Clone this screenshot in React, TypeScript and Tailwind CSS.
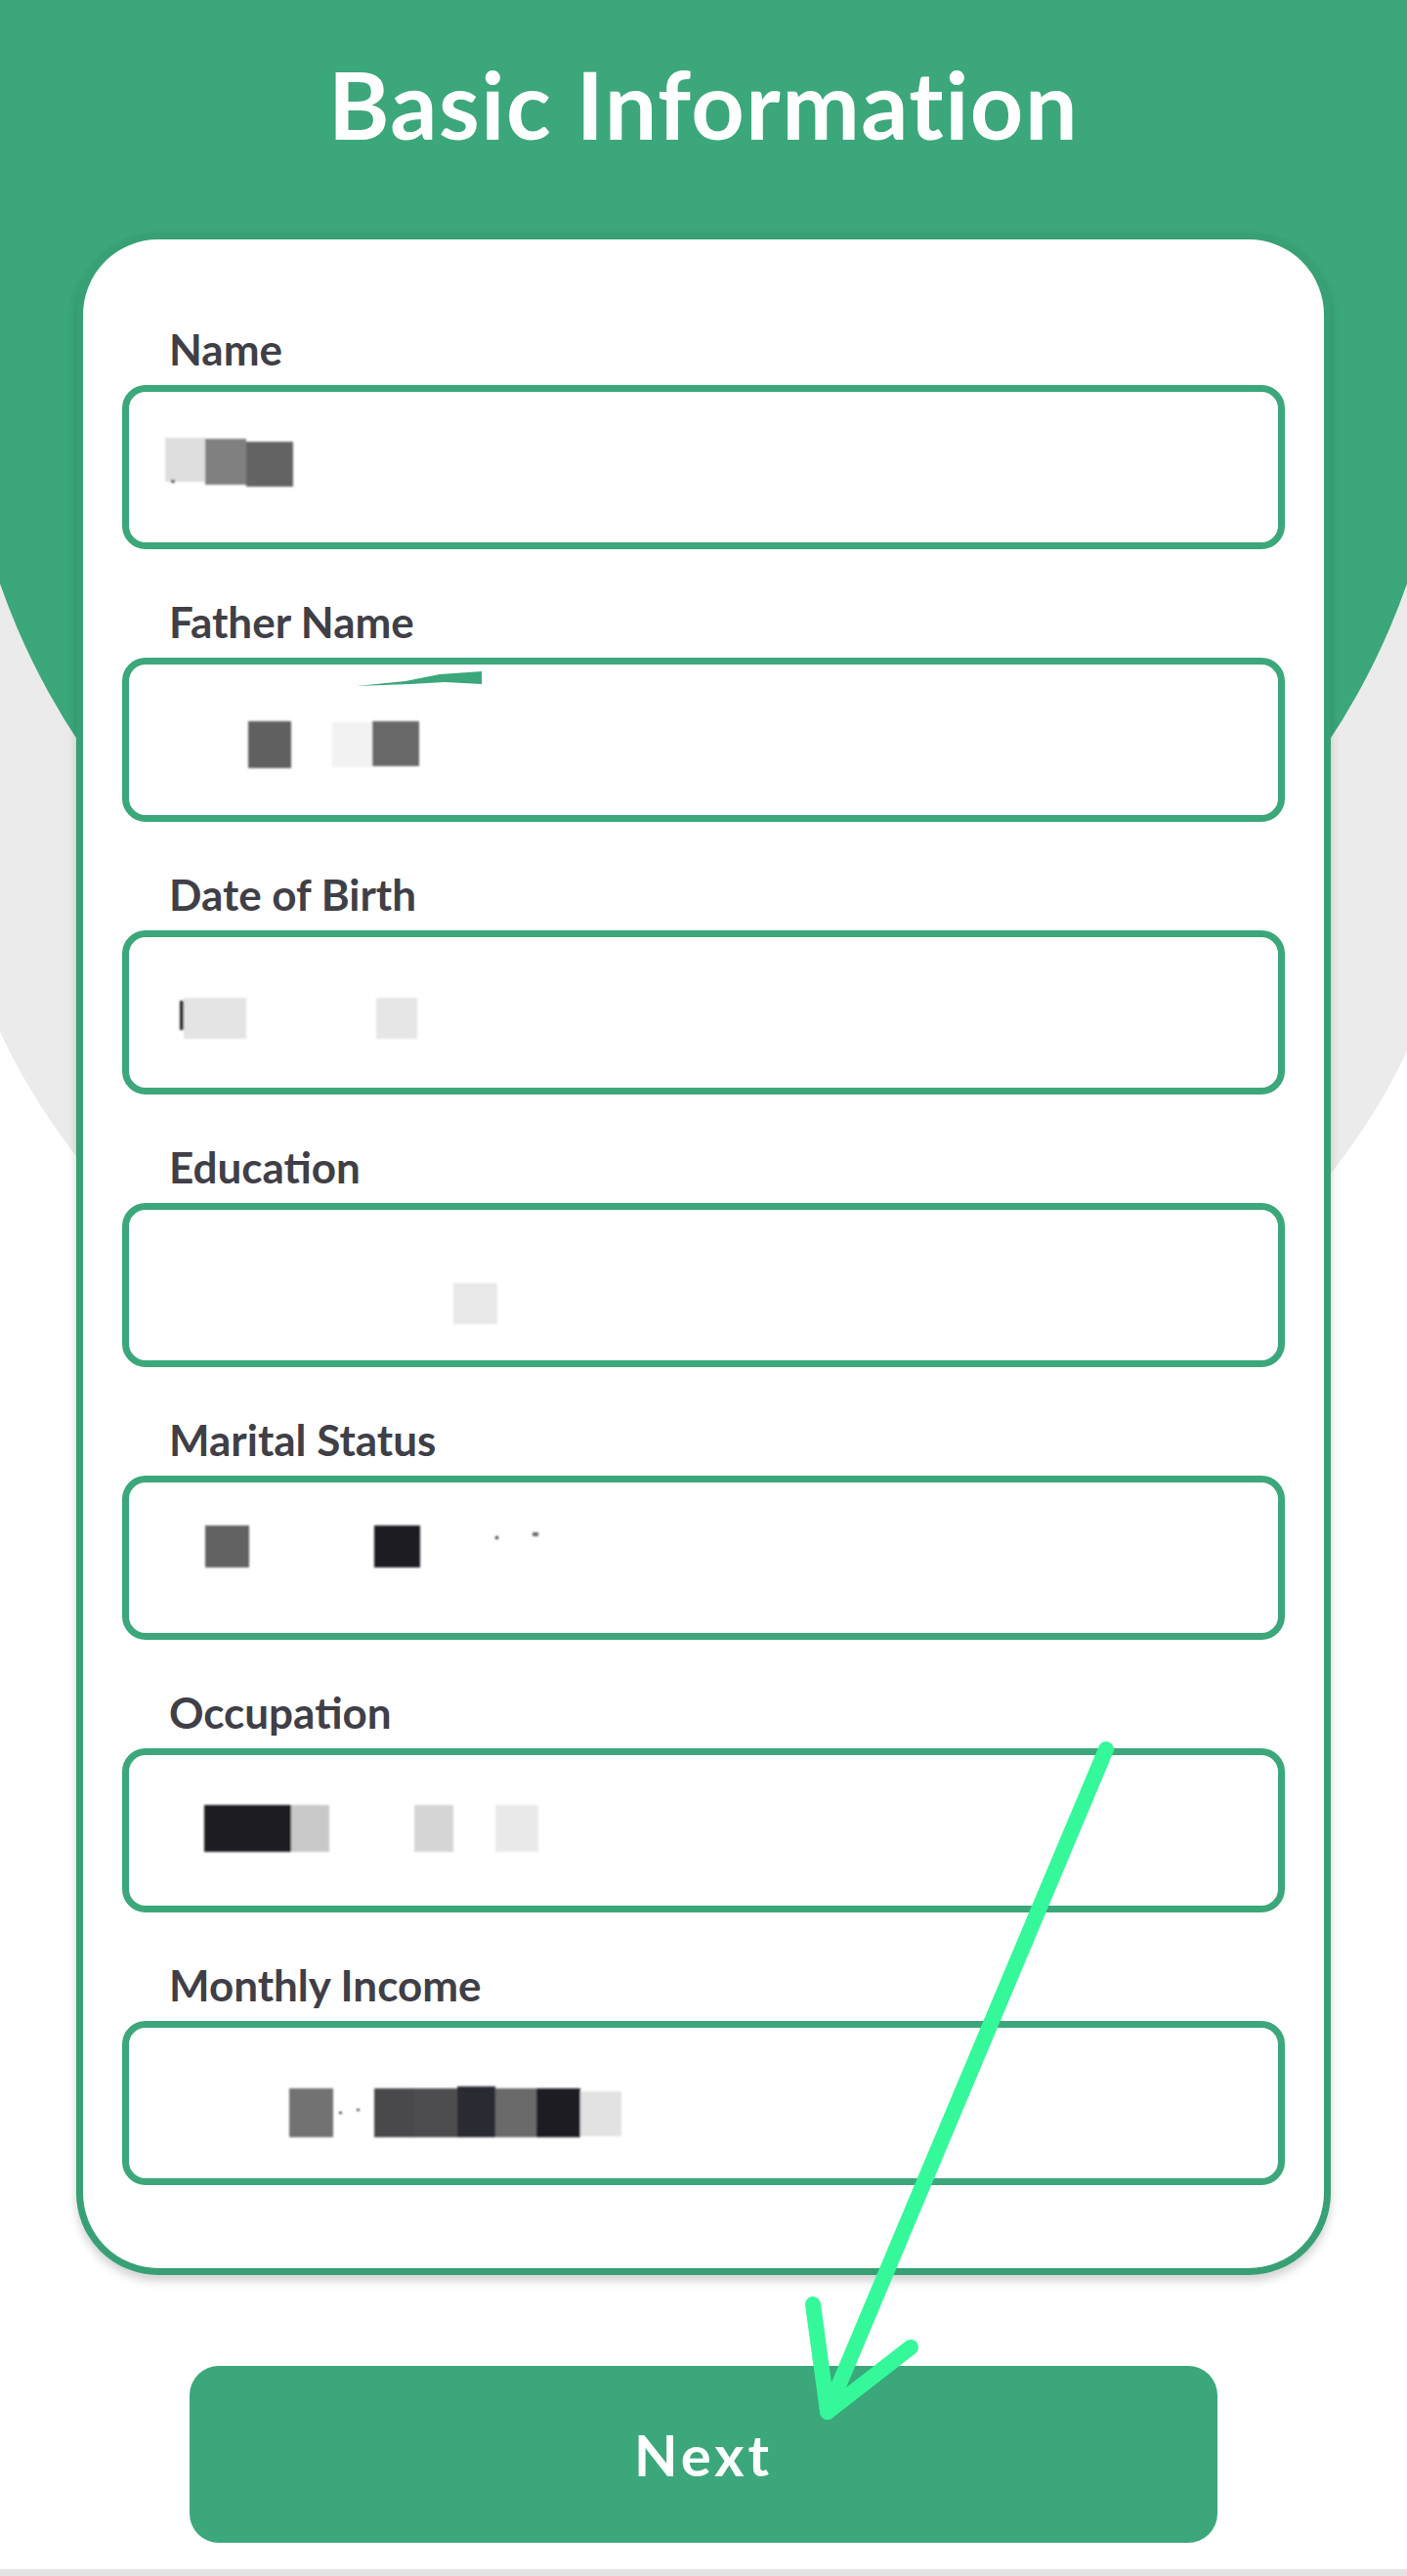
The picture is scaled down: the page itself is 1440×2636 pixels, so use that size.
import React from 'react';

// Basic Information — step 1 of the applicant form.
// Field values are redacted in the source, so each input shows blurred blocks.

type Blob = { x: number; y: number; w: number; h: number; c: string };

const FIELDS: Array<{ label: string; blobs: Blob[]; swoosh?: boolean }> = [
  {
    label: 'Name',
    blobs: [
      { x: 44, y: 54, w: 43, h: 45, c: '#dedede' },
      { x: 85, y: 55, w: 42, h: 47, c: '#808080' },
      { x: 127, y: 58, w: 48, h: 46, c: '#636363' },
      { x: 50, y: 97, w: 4, h: 3, c: '#555555' },
    ],
  },
  {
    label: 'Father Name',
    swoosh: true,
    blobs: [
      { x: 129, y: 65, w: 44, h: 48, c: '#616161' },
      { x: 215, y: 66, w: 41, h: 46, c: '#f2f2f2' },
      { x: 256, y: 65, w: 48, h: 46, c: '#676767' },
    ],
  },
  {
    label: 'Date of Birth',
    blobs: [
      { x: 59, y: 72, w: 4, h: 30, c: '#2a2a2a' },
      { x: 63, y: 69, w: 64, h: 42, c: '#e4e4e4' },
      { x: 260, y: 69, w: 42, h: 42, c: '#e6e6e6' },
    ],
  },
  {
    label: 'Education',
    blobs: [{ x: 339, y: 82, w: 45, h: 42, c: '#e8e8e8' }],
  },
  {
    label: 'Marital Status',
    blobs: [
      { x: 85, y: 51, w: 45, h: 43, c: '#626262' },
      { x: 258, y: 51, w: 47, h: 43, c: '#1d1d20' },
      { x: 382, y: 62, w: 3, h: 3, c: '#333333' },
      { x: 420, y: 58, w: 6, h: 4, c: '#666666' },
    ],
  },
  {
    label: 'Occupation',
    blobs: [
      { x: 84, y: 58, w: 89, h: 48, c: '#1e1e22' },
      { x: 173, y: 58, w: 39, h: 48, c: '#c9c9c9' },
      { x: 299, y: 58, w: 40, h: 48, c: '#d5d5d5' },
      { x: 382, y: 58, w: 44, h: 48, c: '#e9e9e9' },
    ],
  },
  {
    label: 'Monthly Income',
    blobs: [
      { x: 171, y: 69, w: 45, h: 50, c: '#727272' },
      { x: 222, y: 93, w: 3, h: 2, c: '#333333' },
      { x: 240, y: 90, w: 3, h: 2, c: '#333333' },
      { x: 258, y: 69, w: 41, h: 50, c: '#48484c' },
      { x: 299, y: 69, w: 44, h: 50, c: '#4e4e50' },
      { x: 343, y: 67, w: 39, h: 52, c: '#2c2c30' },
      { x: 382, y: 69, w: 42, h: 50, c: '#6a6a6a' },
      { x: 424, y: 69, w: 45, h: 50, c: '#1f1f23' },
      { x: 469, y: 72, w: 42, h: 46, c: '#e2e2e2' },
    ],
  },
];

function RedactedValue({ blobs, swoosh }: { blobs: Blob[]; swoosh?: boolean }) {
  return (
    <svg className="block h-[154px] w-full" viewBox="0 0 1176 154" preserveAspectRatio="xMinYMin meet">
      <defs>
        <filter id="soft" x="-10%" y="-10%" width="120%" height="120%">
          <feGaussianBlur stdDeviation="1.2" />
        </filter>
      </defs>
      <g transform="translate(-7,-7)">
        {swoosh && (
          <path d="M240 29 L290 24 L325 17 L368 14 L368 27 L330 25 L295 27 Z" fill="#3ba77a" />
        )}
        <g filter="url(#soft)">
          {blobs.map((b, i) => (
            <rect key={i} x={b.x} y={b.y} width={b.w} height={b.h} fill={b.c} />
          ))}
        </g>
      </g>
    </svg>
  );
}

function Field({ label, blobs, swoosh }: { label: string; blobs: Blob[]; swoosh?: boolean }) {
  return (
    <div className="flex flex-col">
      <label className="ml-[48px] h-[54px] text-[44px] leading-[54px] font-bold text-[#403f47]">
        {label}
      </label>
      <div className="mt-[10px] h-[168px] rounded-[24px] border-[7px] border-[#3ba77a] bg-white">
        <RedactedValue blobs={blobs} swoosh={swoosh} />
      </div>
    </div>
  );
}

export default function App() {
  return (
    <div className="relative h-[2636px] w-full overflow-hidden bg-white font-['Lato','Noto_Sans',sans-serif]">
      {/* background decoration: grey blob under the green header curve */}
      <div className="pointer-events-none absolute inset-0">
        <div className="absolute left-[-60px] top-[115px] h-[1374px] w-[1560px] rotate-[3.5deg] rounded-[50%] bg-[#ebebeb]" />
        <div className="absolute left-[-40px] top-0 h-[1097px] w-[1520px] rounded-bl-[760px_735px] rounded-br-[760px_735px] bg-[#3ba77a]" />
      </div>

      <div className="relative flex flex-col">
        <h1 className="pt-[49px] text-center text-[95px] leading-[114px] font-bold tracking-[1.5px] text-white">
          Basic Information
        </h1>

        <div className="mx-[78px] mt-[75px] h-[2090px] rounded-[84px] border-[7px] border-[#37a074] bg-white px-[40px] pt-[85px] pb-[85px] shadow-[0_6px_10px_rgba(0,0,0,0.18)]">
          <div className="flex flex-col gap-[47px]">
            {FIELDS.map((f) => (
              <Field key={f.label} label={f.label} blobs={f.blobs} swoosh={f.swoosh} />
            ))}
          </div>
        </div>

        <button className="mx-auto mt-[93px] h-[181px] w-[1052px] rounded-[30px] bg-[#3ba77a] text-[58px] font-bold tracking-[4px] text-white">
          Next
        </button>

        <div className="mt-[27px] h-[7px] bg-[#e4e4e4]" />
      </div>

      {/* hand-drawn annotation arrow on top of the screenshot */}
      <svg className="pointer-events-none absolute inset-0 h-[2636px] w-[1440px]" viewBox="0 0 1440 2636">
        <g stroke="#35f89a" strokeWidth="16" strokeLinecap="round" strokeLinejoin="round" fill="none">
          <path d="M1132 1790 L847 2468" />
          <path d="M832 2358 L847 2468 L932 2402" />
        </g>
      </svg>
    </div>
  );
}
